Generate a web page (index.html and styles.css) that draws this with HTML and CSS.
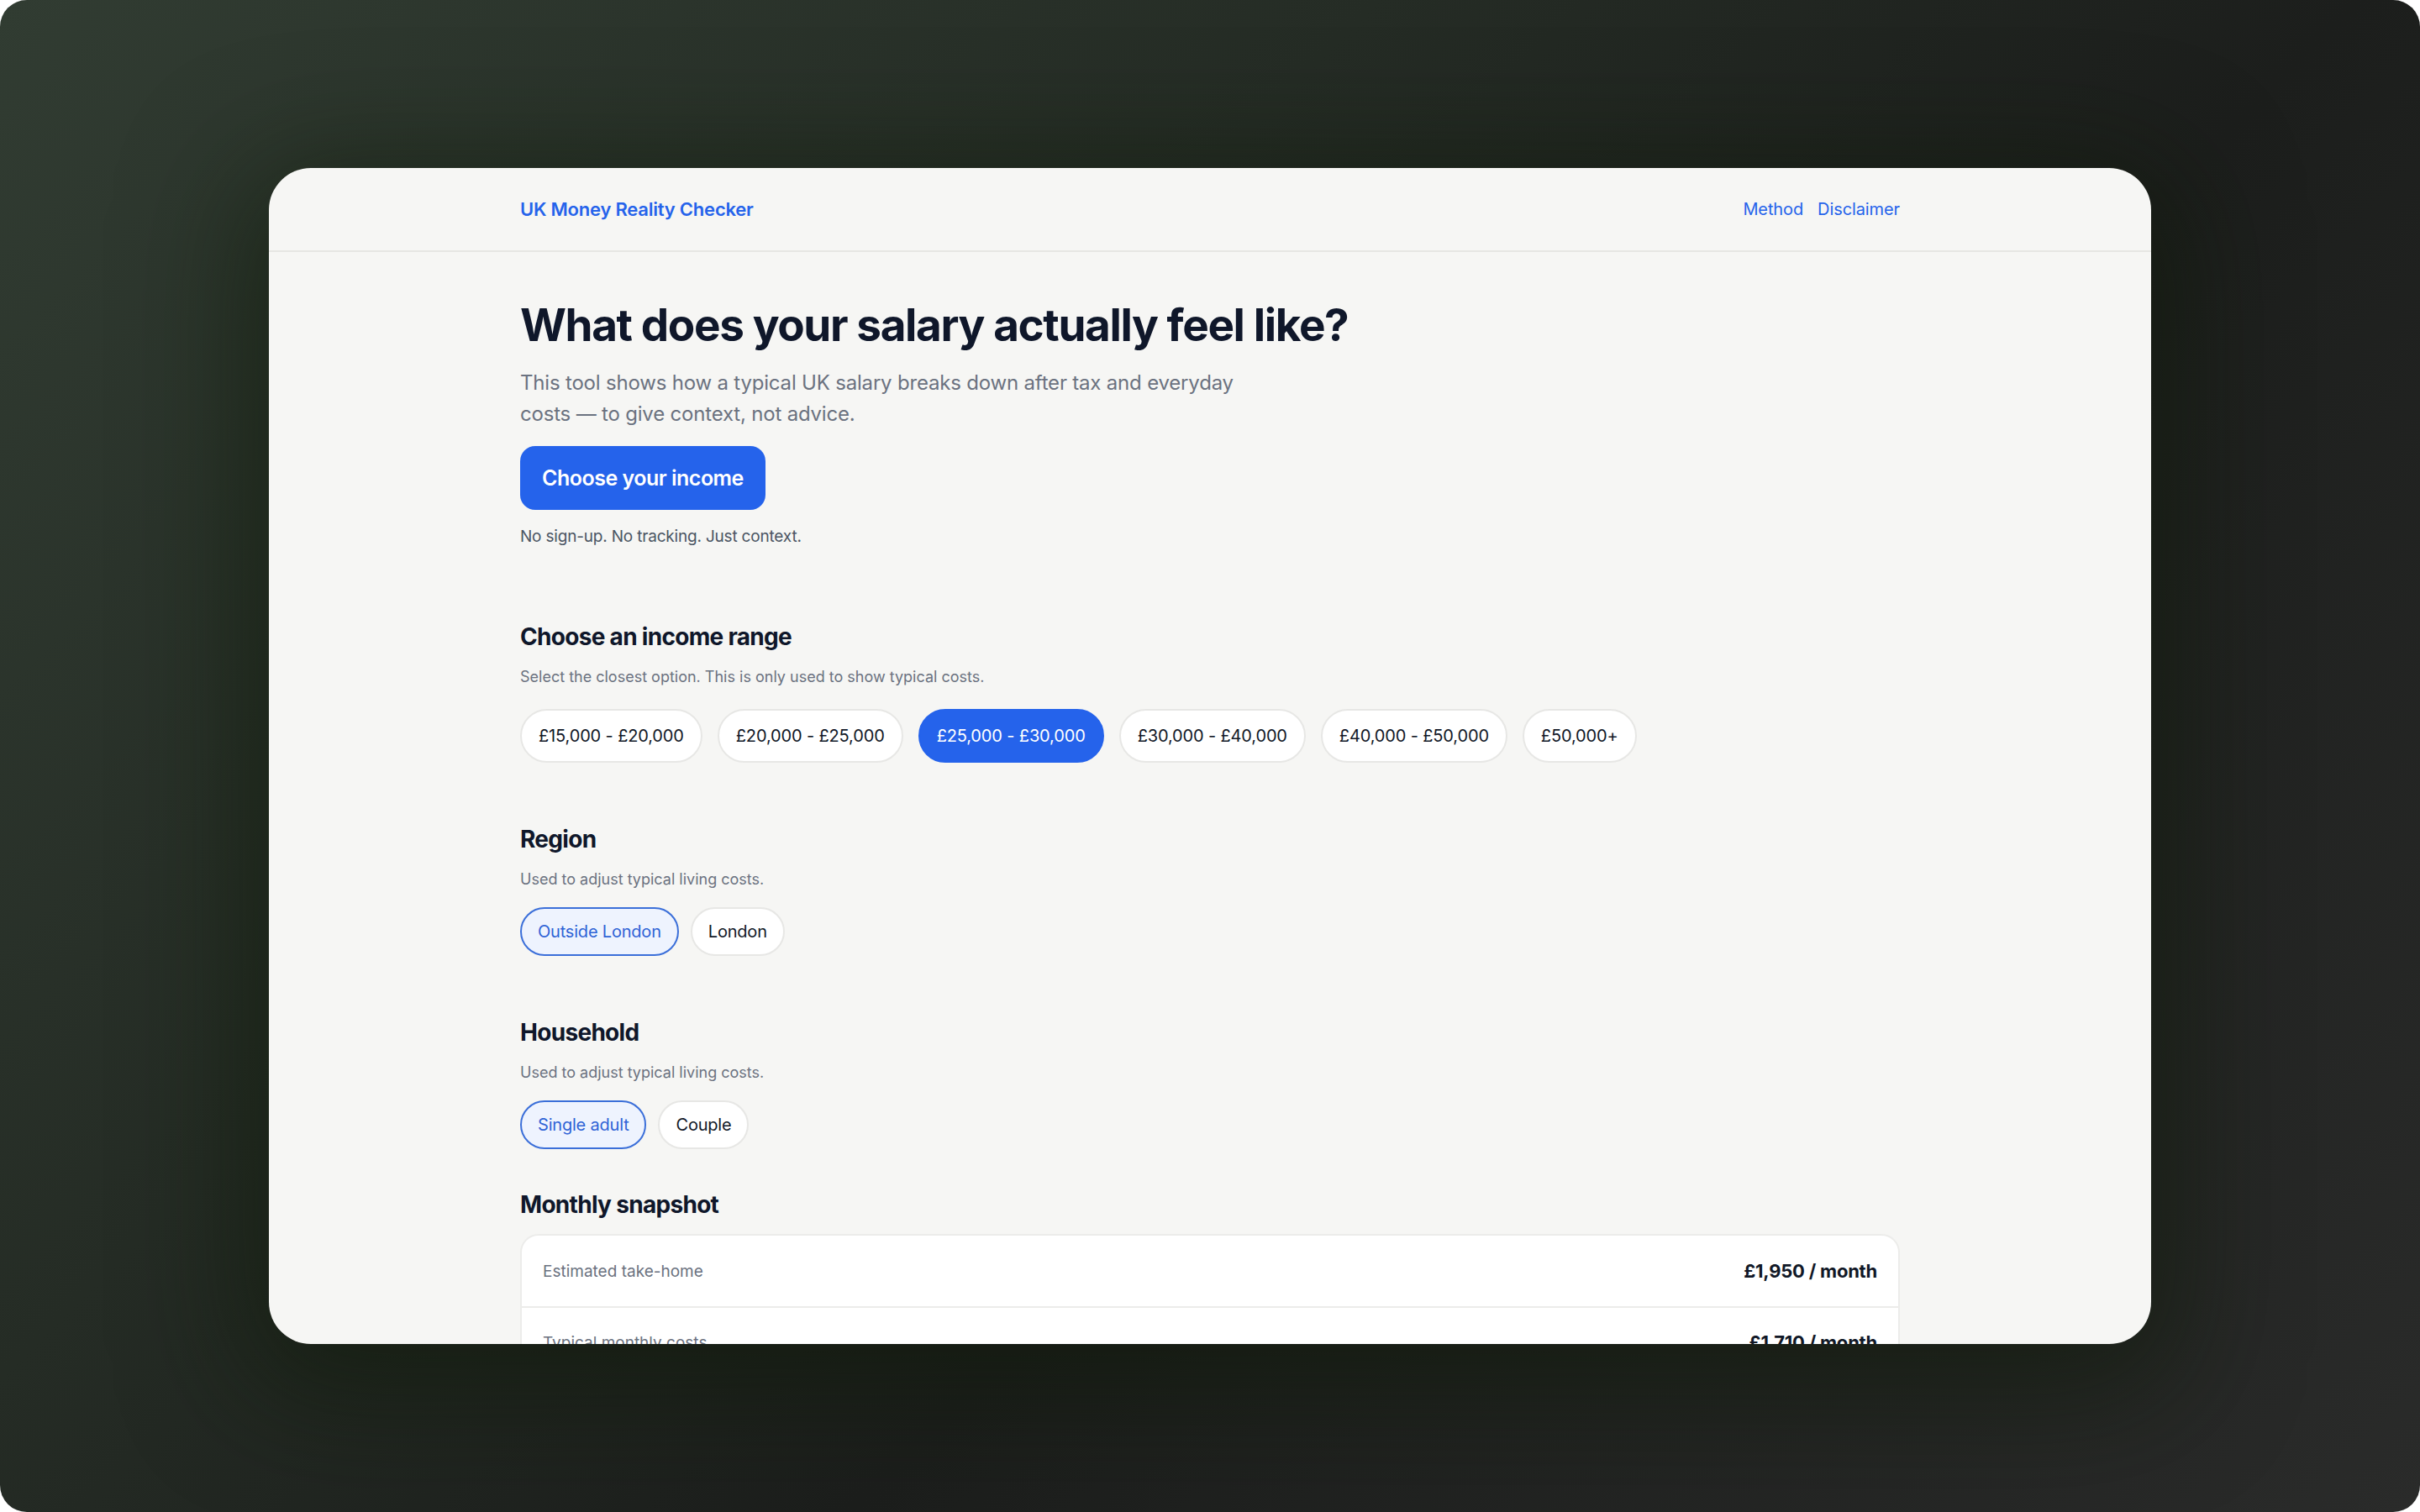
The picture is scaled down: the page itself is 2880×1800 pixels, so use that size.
FILE: index.html
```html
<!DOCTYPE html>
<html lang="en">
<head>
<meta charset="utf-8">
<title>UK Money Reality Checker</title>
<link rel="stylesheet" href="styles.css">
</head>
<body>
<div class="backdrop">
  <div class="window">
    <header class="topbar">
      <div class="container topbar-inner">
        <a class="brand" href="#">UK Money Reality Checker</a>
        <nav class="nav">
          <a href="#">Method</a>
          <a href="#">Disclaimer</a>
        </nav>
      </div>
    </header>
    <main class="container main">
      <section class="hero">
        <h1 class="hero-title">What does your salary actually feel like?</h1>
        <p class="hero-lead">This tool shows how a typical UK salary breaks down after tax and everyday costs — to give context, not advice.</p>
        <button class="cta">Choose your income</button>
        <p class="hero-note">No sign-up. No tracking. Just context.</p>
      </section>

      <section class="block block-income">
        <h2 class="block-title">Choose an income range</h2>
        <p class="block-sub">Select the closest option. This is only used to show typical costs.</p>
        <div class="pills pills-income">
          <button class="pill pill-lg">£15,000 - £20,000</button>
          <button class="pill pill-lg">£20,000 - £25,000</button>
          <button class="pill pill-lg pill-solid">£25,000 - £30,000</button>
          <button class="pill pill-lg">£30,000 - £40,000</button>
          <button class="pill pill-lg">£40,000 - £50,000</button>
          <button class="pill pill-lg">£50,000+</button>
        </div>
      </section>

      <section class="block block-region">
        <h2 class="block-title">Region</h2>
        <p class="block-sub">Used to adjust typical living costs.</p>
        <div class="pills pills-sm">
          <button class="pill pill-soft">Outside London</button>
          <button class="pill">London</button>
        </div>
      </section>

      <section class="block block-household">
        <h2 class="block-title">Household</h2>
        <p class="block-sub">Used to adjust typical living costs.</p>
        <div class="pills pills-sm">
          <button class="pill pill-soft">Single adult</button>
          <button class="pill">Couple</button>
        </div>
      </section>

      <section class="block block-snapshot">
        <h2 class="block-title">Monthly snapshot</h2>
        <div class="card">
          <div class="row"><span class="row-label">Estimated take-home</span><span class="row-value">£1,950 / month</span></div>
          <div class="row"><span class="row-label">Typical monthly costs</span><span class="row-value">£1,710 / month</span></div>
        </div>
      </section>
    </main>
  </div>
</div>
</body>
</html>
```

FILE: styles.css
```css
* { box-sizing: border-box; }

html, body {
  margin: 0;
  padding: 0;
  background: #ffffff;
}

body {
  font-family: Inter, "Noto Sans", "Liberation Sans", sans-serif;
  color: #111827;
}

.backdrop {
  width: 2880px;
  height: 1800px;
  border-radius: 32px;
  overflow: hidden;
  display: flex;
  align-items: center;
  justify-content: center;
  background:
    radial-gradient(ellipse 1500px 1000px at 50% 50%, rgba(24, 40, 18, 0.9), rgba(24, 40, 18, 0) 70%),
    linear-gradient(135deg, #313c32 0%, #252c25 35%, #1c1e1c 60%, #2a2b2a 100%);
}

.window {
  width: 2240px;
  height: 1400px;
  border-radius: 50px;
  overflow: hidden;
  background: #f6f6f4;
  box-shadow: 0 30px 140px 30px rgba(14, 26, 10, 0.55);
}

.container {
  width: 1642px;
  margin: 0 auto;
}

.topbar {
  height: 100px;
  border-bottom: 2px solid #e6e6e3;
}

.topbar-inner {
  height: 100%;
  display: flex;
  align-items: center;
  justify-content: space-between;
}

.brand {
  color: #2563eb;
  font-size: 22px;
  font-weight: 600;
  text-decoration: none;
  letter-spacing: -0.01em;
}

.nav {
  display: flex;
  gap: 17px;
}

.nav a {
  color: #2563eb;
  font-size: 20px;
  text-decoration: none;
  letter-spacing: -0.005em;
}

.main {
  padding-top: 55px;
}

.hero-title {
  margin: 0 0 18px;
  font-size: 53px;
  line-height: 64px;
  font-weight: 700;
  letter-spacing: -0.026em;
  color: #0f172a;
}

.hero-lead {
  margin: 0;
  max-width: 880px;
  font-size: 24px;
  line-height: 37px;
  color: #6b7280;
  letter-spacing: -0.008em;
}

.cta {
  margin-top: 20px;
  height: 76px;
  padding: 0 26px;
  border: none;
  border-radius: 18px;
  background: #2563eb;
  color: #ffffff;
  font-family: inherit;
  font-size: 25px;
  font-weight: 600;
  letter-spacing: -0.02em;
}

.hero-note {
  margin: 18px 0 0;
  font-size: 19px;
  line-height: 28px;
  color: #4b5563;
  letter-spacing: -0.01em;
}

.block-title {
  margin: 0;
  font-size: 28px;
  line-height: 36px;
  font-weight: 700;
  letter-spacing: -0.025em;
  color: #0f172a;
}

.block-sub {
  margin: 17px 0 0;
  font-size: 18px;
  line-height: 26px;
  color: #6b7280;
}

.block-income { margin-top: 87px; }
.block-region { margin-top: 73px; }
.block-household { margin-top: 73px; }
.block-snapshot { margin-top: 48px; }

.pills {
  display: flex;
  flex-wrap: wrap;
}

.pills-income {
  margin-top: 25px;
  gap: 18px;
}

.pills-sm {
  margin-top: 20px;
  gap: 14px;
}

.pill {
  height: 58px;
  padding: 0 19px;
  border: 2px solid #e7e7e5;
  border-radius: 999px;
  background: #ffffff;
  color: #111827;
  font-family: inherit;
  font-size: 20px;
  letter-spacing: -0.01em;
}

.pill-lg {
  height: 64px;
  padding: 0 20px;
  letter-spacing: -0.007em;
}

.pill-solid {
  background: #2563eb;
  border-color: #2563eb;
  color: #ffffff;
}

.pill-soft {
  background: #eef3fe;
  border-color: #3b6fd9;
  color: #2f63d6;
}

.card {
  margin-top: 17px;
  background: #ffffff;
  border: 2px solid #ececea;
  border-radius: 22px;
}

.row {
  height: 84px;
  padding: 0 25px;
  display: flex;
  align-items: center;
  justify-content: space-between;
}

.row + .row {
  border-top: 2px solid #ececea;
}

.row-label {
  font-size: 19px;
  color: #6b7280;
}

.row-value {
  font-size: 22px;
  font-weight: 700;
  color: #111827;
  letter-spacing: -0.01em;
}
```
